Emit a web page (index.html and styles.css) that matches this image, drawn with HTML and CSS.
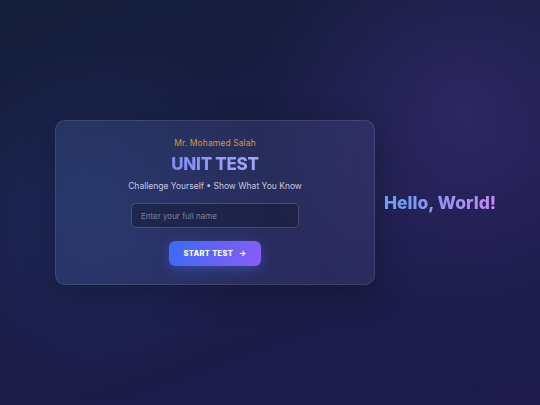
FILE: index.html
```html
<!DOCTYPE html>
<html lang="en">
<head>
    <meta charset="UTF-8">
    <meta name="viewport" content="width=device-width, initial-scale=1.0">
    <title>Unit Test</title>
    <link rel="stylesheet" href="styles.css">
</head>
<body>

<div class="card">
    <p class="teacher">Mr. Mohamed Salah</p>
    <h1 class="title">UNIT TEST</h1>
    <p class="subtitle">Challenge Yourself • Show What You Know</p>
    <input class="name-input" type="text" placeholder="Enter your full name">
    <button class="start-btn">START TEST <span class="arrow">&#8594;</span></button>
</div>

<h2 class="hello">Hello, World!</h2>

</body>
</html>
```

FILE: styles.css
```css
body {
    font-family: 'Inter', 'Noto Sans', sans-serif;
    display: flex;
    align-items: center;
    gap: 9px;
    height: 100vh;
    margin: 0;
    padding-left: 55px;
    color: #fff;
    background-color: #1a1c45;
    background-image:
        radial-gradient(circle at 86% 28%, rgba(110, 70, 200, 0.22), transparent 38%),
        radial-gradient(circle at 18% 52%, rgba(60, 110, 220, 0.14), transparent 35%),
        linear-gradient(160deg, #141d3a 0%, #1b1d48 55%, #1e1b4d 100%);
}
.card {
    width: 320px;
    box-sizing: border-box;
    padding: 17px 20px 18px;
    border: 1px solid rgba(255, 255, 255, 0.1);
    border-radius: 10px;
    background: linear-gradient(100deg, rgba(70, 95, 160, 0.3), rgba(80, 80, 140, 0.28));
    box-shadow: 0 8px 30px rgba(0, 0, 0, 0.25);
    display: flex;
    flex-direction: column;
    align-items: center;
}
.teacher {
    margin: 0;
    font-size: 8.5px;
    color: #d9963a;
    letter-spacing: 0.1px;
}
.title {
    margin: 6px 0 0;
    font-size: 17px;
    font-weight: 800;
    letter-spacing: -0.3px;
    background: linear-gradient(90deg, #7e8cf4, #a5a8f7);
    -webkit-background-clip: text;
    color: transparent;
}
.subtitle {
    margin: 7px 0 0;
    font-size: 8.5px;
    color: #c6c9df;
}
.name-input {
    margin-top: 12px;
    width: 168px;
    height: 25px;
    box-sizing: border-box;
    padding: 0 9px;
    border: 1px solid rgba(255, 255, 255, 0.18);
    border-radius: 5px;
    background: rgba(18, 22, 48, 0.45);
    color: #fff;
    font-family: inherit;
    font-size: 8px;
}
.name-input::placeholder {
    color: #7c8299;
}
.start-btn {
    margin-top: 13px;
    width: 92px;
    height: 25px;
    border: none;
    border-radius: 6px;
    background: linear-gradient(110deg, #3c6bf4, #8b5cf6);
    color: #fff;
    font-family: inherit;
    font-size: 7.5px;
    font-weight: 800;
    letter-spacing: 0.3px;
    box-shadow: 0 3px 12px rgba(80, 100, 245, 0.45);
    cursor: pointer;
}
.arrow {
    margin-left: 4px;
}
.hello {
    margin: 0;
    font-size: 17.5px;
    font-weight: 800;
    background: linear-gradient(90deg, #62a0f5, #c589f2);
    -webkit-background-clip: text;
    color: transparent;
}
```
